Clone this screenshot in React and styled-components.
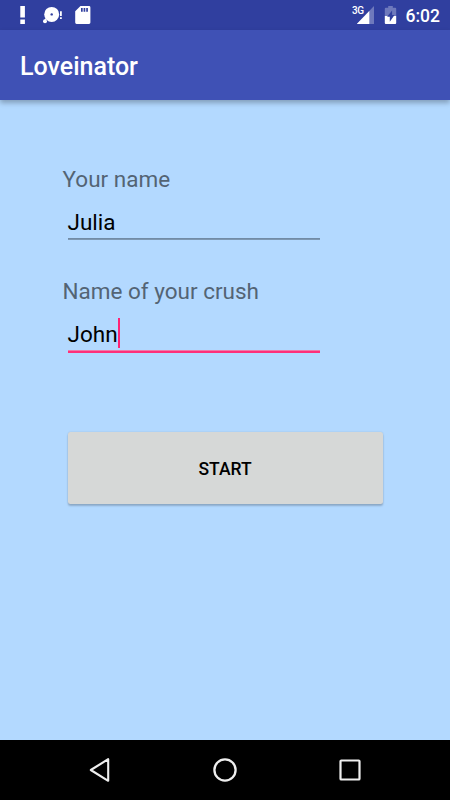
import React from "react";
import styled, { createGlobalStyle } from "styled-components";

const GlobalStyle = createGlobalStyle`
  * {
    box-sizing: border-box;
  }
  body {
    margin: 0;
    font-family: Roboto, sans-serif;
  }
`;

const Screen = styled.div`
  width: 450px;
  height: 800px;
  display: flex;
  flex-direction: column;
  background-color: #b3d9ff;
  overflow: hidden;
`;

const StatusBar = styled.div`
  height: 30px;
  flex-shrink: 0;
  display: flex;
  justify-content: space-between;
  background-color: #303f9f;
`;

const Clock = styled.span`
  width: 45px;
  padding-left: 0.5px;
  font-size: 17.5px;
  font-weight: 500;
  line-height: 32px;
  color: #fff;
`;

const StatusRight = styled.div`
  display: flex;
`;

const NetworkLabel = styled.span`
  padding-top: 4.5px;
  margin-right: -8px;
  width: 13px;
  font-size: 10px;
  font-weight: 500;
  letter-spacing: -0.4px;
  line-height: 12px;
  color: #fff;
`;

const AppBar = styled.header`
  height: 70px;
  flex-shrink: 0;
  padding-left: 20px;
  background-color: #3f51b5;
  box-shadow: 0 3px 5px rgba(0, 0, 0, 0.27);
`;

const Title = styled.h1`
  margin: 0;
  font-size: 25px;
  font-weight: 500;
  line-height: 73px;
  color: #fff;
`;

const Form = styled.main`
  flex: 1;
  display: flex;
  flex-direction: column;
  padding: 65px 62px 0;
`;

const Field = styled.div`
  height: 112px;
`;

const Label = styled.div`
  padding-left: 0.5px;
  font-size: 22.5px;
  line-height: 28px;
  color: #536474;
`;

const Input = styled.div`
  width: 253px;
  height: 47px;
  margin-left: 5.5px;
  padding-top: 12px;
  display: flex;
  align-items: flex-start;
  font-size: 22.5px;
  line-height: 34px;
  color: #000;
`;

const Underline = styled.div`
  width: 252px;
  height: ${(props) => (props.$focused ? "3px" : "2px")};
  margin: -2px 0 0 6px;
  background-color: ${(props) => (props.$focused ? "#ff3079" : "#7d98b3")};
  border-top: 1px solid ${(props) => (props.$focused ? "#ee7bac" : "#718ba6")};
`;

const Caret = styled.span`
  width: 2px;
  height: 30px;
  margin: 1px 0 0 0.5px;
  background-color: #ff2475;
`;

const StartButton = styled.button`
  height: 72px;
  width: 315px;
  margin: 43px 0 0 5.5px;
  padding: 2px 0 0;
  border: 0;
  border-radius: 2.5px;
  background-color: #d6d8d7;
  box-shadow: 0 2px 2px rgba(0, 0, 0, 0.2), 0 0 2px rgba(0, 0, 0, 0.12);
  font-family: inherit;
  font-size: 17.5px;
  font-weight: 500;
  color: #000;
`;

const NavBar = styled.nav`
  height: 60px;
  flex-shrink: 0;
  display: flex;
  justify-content: center;
  background-color: #000;
`;

const NavItem = styled.div`
  width: 125px;
  display: flex;
  align-items: center;
  justify-content: center;
`;

const NotificationIcons = () => (
  <svg width="100" height="30" fill="#fff">
    <path d="M20.3 6h4.6v11.6h-4.6zM20.3 19.5h4.6V24h-4.6z" />
    <circle cx="51.7" cy="14.4" r="7.5" />
    <circle cx="51.7" cy="14.4" r="1.2" fill="#303f9f" />
    <path d="M46.5 18l-2.5 3.5" stroke="#fff" strokeWidth="1.2" />
    <circle cx="45" cy="21.2" r="2" />
    <path d="M60 11.2h1.8v4.8H60zM60 17.3h1.8v1.6H60z" />
    <path d="M80.5 6H89a1.4 1.4 0 0 1 1.4 1.4v15.2A1.4 1.4 0 0 1 89 24H76.6a1.4 1.4 0 0 1-1.4-1.4V11.3z" />
    <path
      d="M81 8h1.7v3.7H81zM83.6 8h1.7v3.7h-1.7zM86.2 8h1.7v3.7h-1.7z"
      fill="#303f9f"
    />
  </svg>
);

const SignalIcon = () => (
  <svg width="18" height="30" fill="#fff">
    <path d="M17 6v18H-.2z" opacity="0.3" />
    <path d="M12.3 11v13H-.2z" />
  </svg>
);

const BatteryIcon = () => (
  <svg width="30" height="30" fill="#fff">
    <path
      d="M13.2 6h4.6v1.8h2.4q1 0 1 1V16H9.8V8.8q0-1 1-1h2.4z"
      opacity="0.3"
    />
    <path d="M9.8 16h11.4v7q0 1-1 1h-9.4q-1 0-1-1z" />
    <path d="M17.1 10.5l-5 6.3h2.7v5l4.7-6.8h-2.4z" fill="#303f9f" />
  </svg>
);

const TextField = ({ label, value, focused }) => (
  <Field>
    <Label>{label}</Label>
    <Input>
      {value}
      {focused && <Caret />}
    </Input>
    <Underline $focused={focused} />
  </Field>
);

export default function App() {
  return (
    <>
      <GlobalStyle />
      <Screen>
        <StatusBar>
          <NotificationIcons />
          <StatusRight>
            <NetworkLabel>3G</NetworkLabel>
            <SignalIcon />
            <BatteryIcon />
            <Clock>6:02</Clock>
          </StatusRight>
        </StatusBar>
        <AppBar>
          <Title>Loveinator</Title>
        </AppBar>
        <Form>
          <TextField label="Your name" value="Julia" />
          <TextField label="Name of your crush" value="John" focused />
          <StartButton>START</StartButton>
        </Form>
        <NavBar>
          <NavItem>
            <svg width="24" height="28" fill="none" stroke="#eee">
              <path
                d="M20.2 3.2v21.6L2.8 14z"
                strokeWidth="2.1"
                strokeLinejoin="round"
              />
            </svg>
          </NavItem>
          <NavItem>
            <svg width="26" height="26" fill="none" stroke="#eee">
              <circle cx="13" cy="13" r="10.6" strokeWidth="2.3" />
            </svg>
          </NavItem>
          <NavItem>
            <svg width="24" height="24" fill="none" stroke="#eee">
              <rect
                x="2.5"
                y="2.5"
                width="19"
                height="19"
                rx="0.8"
                strokeWidth="2.2"
              />
            </svg>
          </NavItem>
        </NavBar>
      </Screen>
    </>
  );
}
